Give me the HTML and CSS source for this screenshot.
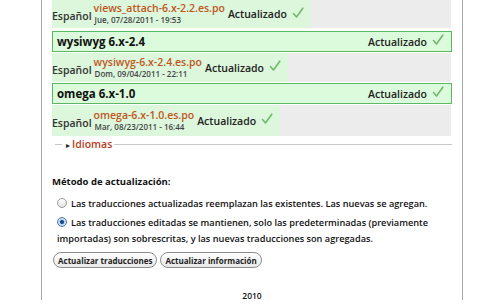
FILE: index.html
```html
<!DOCTYPE html>
<html lang="es">
<head>
<meta charset="utf-8">
<link rel="stylesheet" href="styles.css">
</head>
<body>
<div class="page">
  <div class="content">
    <div class="lang lang-first">
      <div class="ok">
        <span class="lname">Español</span>
        <span class="file"><span class="fname">views_attach-6.x-2.2.es.po</span><span class="date">Jue, 07/28/2011 - 19:53</span></span>
        <span class="status">Actualizado <svg class="check" viewBox="0 0 12 12"><path d="M1.5 6.5 L4.5 10 L10.8 1.2" /></svg></span>
      </div>
    </div>
    <div class="proj"><span class="pname">wysiwyg 6.x-2.4</span><span class="status">Actualizado <svg class="check" viewBox="0 0 12 12"><path d="M1.5 6.5 L4.5 10 L10.8 1.2" /></svg></span></div>
    <div class="lang">
      <div class="ok">
        <span class="lname">Español</span>
        <span class="file"><span class="fname">wysiwyg-6.x-2.4.es.po</span><span class="date">Dom, 09/04/2011 - 22:11</span></span>
        <span class="status">Actualizado <svg class="check" viewBox="0 0 12 12"><path d="M1.5 6.5 L4.5 10 L10.8 1.2" /></svg></span>
      </div>
    </div>
    <div class="proj"><span class="pname">omega 6.x-1.0</span><span class="status">Actualizado <svg class="check" viewBox="0 0 12 12"><path d="M1.5 6.5 L4.5 10 L10.8 1.2" /></svg></span></div>
    <div class="lang lang-last">
      <div class="ok">
        <span class="lname">Español</span>
        <span class="file"><span class="fname">omega-6.x-1.0.es.po</span><span class="date">Mar, 08/23/2011 - 16:44</span></span>
        <span class="status">Actualizado <svg class="check" viewBox="0 0 12 12"><path d="M1.5 6.5 L4.5 10 L10.8 1.2" /></svg></span>
      </div>
    </div>
    <div class="fieldset">
      <span class="dash"></span>
      <span class="legend"><span class="tri">▸</span>Idiomas</span>
      <span class="rule"></span>
    </div>
    <div class="method">
      <div class="mlabel">Método de actualización:</div>
      <label class="opt"><span class="radio"></span>Las traducciones actualizadas reemplazan las existentes. Las nuevas se agregan.</label>
      <label class="opt"><span class="radio on"></span>Las traducciones editadas se mantienen, solo las predeterminadas (previamente importadas) son sobrescritas, y las nuevas traducciones son agregadas.</label>
    </div>
    <div class="buttons">
      <button class="btn">Actualizar traducciones</button>
      <button class="btn">Actualizar información</button>
    </div>
    <div class="footer">2010</div>
  </div>
</div>
</body>
</html>
```
FILE: styles.css
```css
html, body {
  margin: 0;
  padding: 0;
  background: #fff;
}
body {
  font-family: "Open Sans", "DejaVu Sans", sans-serif;
  font-weight: 600;
  color: #222;
  font-size: 9px;
}
.page {
  margin-left: 41px;
  width: 420px;
  height: 300px;
  border-left: 1px solid #a8a8a8;
  border-right: 1px solid #a8a8a8;
}
.content {
  padding: 0 10px 0 10px;
}
.lang {
  display: flex;
  background: #ececec;
  height: 29px;
  margin: 1px 1px 1px 0;
}
.lang-first { height: 28px; margin: 0 1px 3px 0; }
.lang-last { height: 31px; }
.ok {
  display: flex;
  align-items: center;
  background: #dcf7dc;
  padding-right: 7px;
}
.lname {
  font-size: 10.5px;
  color: #333;
  margin-top: 4px;
}
.file {
  display: flex;
  flex-direction: column;
  margin-left: 2px;
  line-height: 12px;
}
.fname {
  color: #c0561d;
  font-size: 10.5px;
}
.date {
  font-size: 8px;
  color: #444;
  margin-left: 1px;
}
.status {
  display: flex;
  align-items: center;
  font-size: 10.5px;
  color: #222;
  margin-left: 3px;
}
.check {
  width: 12px;
  height: 12px;
  margin-left: 5px;
  margin-top: -3px;
  fill: none;
  stroke: #72b96c;
  stroke-width: 1.6;
  stroke-linecap: round;
  stroke-linejoin: round;
}
.proj {
  display: flex;
  align-items: center;
  justify-content: space-between;
  height: 19px;
  border: 1px solid #5cb963;
  background: #dcfadc;
  padding: 0 7px 0 4px;
}
.pname {
  font-size: 11.5px;
  font-weight: 700;
  color: #111;
}
.fieldset {
  display: flex;
  align-items: center;
  height: 14px;
  margin-top: 1px;
}
.dash {
  width: 7px;
  margin-left: 3px;
  border-top: 1px solid #c8c8c8;
}
.legend {
  color: #b63d1c;
  font-size: 10.5px;
  padding: 0 2px 0 4px;
}
.tri {
  color: #222;
  font-size: 8px;
  margin-right: 2px;
}
.rule {
  flex: 1;
  border-top: 1px solid #c8c8c8;
}
.method {
  margin-top: 24px;
}
.mlabel {
  font-size: 9.5px;
  font-weight: 700;
  color: #111;
  margin-bottom: 8px;
}
.opt {
  display: block;
  font-size: 9.2px;
  line-height: 16px;
  color: #111;
  margin-bottom: 3px;
  padding-left: 5px;
}
.radio {
  display: inline-block;
  width: 8px;
  height: 8px;
  border: 1px solid #9a9a9a;
  border-radius: 50%;
  background: linear-gradient(#fff, #e4e4e4);
  margin-right: 4px;
  vertical-align: -1px;
}
.radio.on {
  border-color: #5577a8;
  background: radial-gradient(circle, #1d4f93 0 1.8px, #b9cfee 2.3px, #e6eefa 100%);
}
.buttons {
  display: flex;
  gap: 3px;
  margin-top: 5px;
  padding-left: 1px;
}
.btn {
  font-family: inherit;
  font-weight: 700;
  font-size: 8px;
  color: #222;
  height: 16px;
  padding: 0 4px;
  border: 1px solid #8e8e8e;
  border-radius: 8px;
  background: linear-gradient(#ffffff, #e9e9e9);
}
.footer {
  text-align: center;
  font-size: 8.5px;
  margin-top: 22px;
  color: #111;
}
```
